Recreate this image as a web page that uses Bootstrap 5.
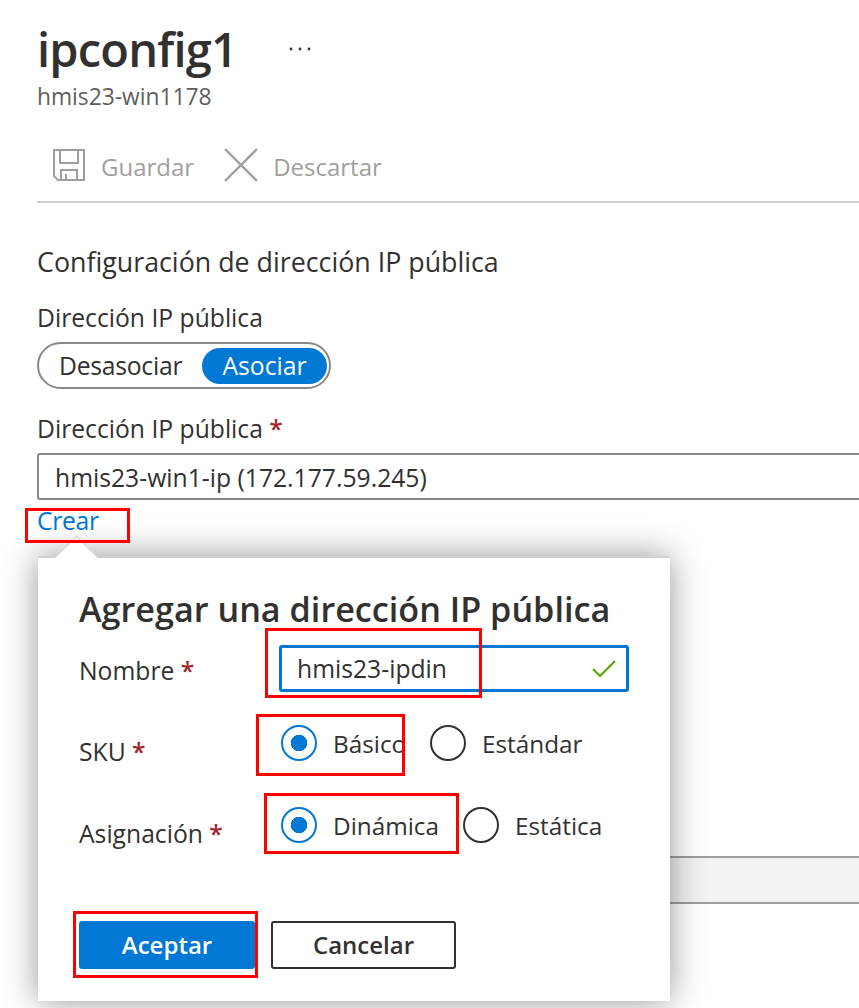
<!DOCTYPE html>
<html lang="es">
<head>
  <meta charset="UTF-8" />
  <meta name="viewport" content="width=device-width, initial-scale=1.0" />
  <title>ipconfig1</title>
  <link href="https://cdn.jsdelivr.net/npm/bootstrap@5.3.0/dist/css/bootstrap.min.css" rel="stylesheet" />
  <style>
    html, body { height: 1008px; overflow: hidden; }
    body { font-family: "Open Sans", "Noto Sans", sans-serif; color: #323130; font-size: 24.7px; background: #fff; }
    .page-wrap { position: relative; height: 1008px; padding: 19px 0 0 37px; }
    .page-title { font-size: 47px; font-weight: 600; line-height: 60px; margin: 0; letter-spacing: -.8px; }
    .more-dots { margin: 0 0 0 52px; }
    .sub-title { font-size: 22.8px; line-height: 30px; color: #605e5c; margin-top: 3px; }
    .cmd-bar { height: 54px; margin-top: 28px; padding-left: 16px; border-bottom: 2px solid #d2d0ce; padding-bottom: 7px; box-sizing: content-box; color: #a19f9d; font-size: 24px; gap: 30px; }
    .cmd-item { gap: 16px; }
    .cmd-x { gap: 15px; }
    .cmd-item svg { margin-top: -4px; }
    .sect-title { font-size: 26.8px; line-height: 34px; margin-top: 42px; }
    .fld-label { line-height: 32px; }
    .fld-first { margin-top: 23px; }
    .req-star { color: #a4262c; font-weight: 600; }
    .pill-toggle { width: 294px; height: 47px; border: 2px solid #8a8886; border-radius: 24px; padding: 4px; margin-top: 8px; margin-bottom: 24px; }
    .pill-off { padding-left: 16px; width: 159px; flex: none; letter-spacing: -.25px; }
    .pill-on { width: 125px; height: 36px; flex: none; background: #0078d4; color: #fff; border-radius: 18px; }
    .ip-box { width: 100%; height: 47px; border: 2px solid #8a8886; border-right: 0; border-radius: 3px 0 0 3px; padding: 2px 0 0 16px; margin-top: 8px; }
    .crear-link { color: #0078d4; line-height: 42px; height: 40px; display: block; text-decoration: none; letter-spacing: -.3px; }
    .dis-box { margin-left: 3px; height: 48px; background: #f3f2f1; border-top: 2px solid #a19f9d; border-bottom: 2px solid #a19f9d; margin-top: 316px; }
    .pop-card { position: absolute; left: 38px; top: 556px; width: 632px; height: 445px; background: #fff; border-top: 2px solid #d2d0ce; box-shadow: 0 0 34px rgba(0,0,0,.42); border-radius: 2px 2px 0 0; padding: 31px 41px 0 41px; }
    .pop-arrow { position: absolute; left: 23px; top: -16px; width: 31px; height: 31px; background: #fff; transform: rotate(45deg); border-left: 1px solid #d2d0ce; border-top: 1px solid #d2d0ce; }
    .pop-title { font-size: 34.2px; font-weight: 600; line-height: 40px; margin: 0 0 16px; position: relative; }
    .pop-row { display: flex; }
    .pop-label { width: 200px; flex: none; }
    .name-label { padding-top: 4px; }
    .name-box { width: 350px; height: 47px; border: 3px solid #0078d4; border-radius: 3px; padding: 0 10px 0 15px; }
    .sku-row { height: 82px; margin-top: 21px; }
    .asig-row { height: 82px; }
    .choice-label { padding-top: 20px; }
    .radio-row { height: 60px; align-self: flex-start; padding-left: 2px; font-size: 24.3px; }
    .radio-row span { padding-top: 2px; }
    .form-check-input.az-radio { width: 36px; height: 36px; margin: 0 16px 0 0; flex: none; border: 2px solid #323130; background-image: none; float: none; }
    .form-check-input.az-radio:checked { background-color: #fff; border-color: #0078d4; background-image: radial-gradient(circle, #0078d4 0, #0078d4 8px, transparent 8.5px); }
    .form-check-input.az-radio:focus { box-shadow: none; }
    .radio-one { width: 97px; }
    .radio-two { width: 130px; }
    .btn-row { margin-top: 44px; }
    .btn.az-btn { width: 176px; height: 48px; border-radius: 3px; font-size: 24px; font-weight: 600; padding: 0; color: #323130; border: 2px solid #323130; background: #fff; }
    .btn.az-btn.az-primary { background: #0078d4; border-color: #0078d4; color: #fff; }
    .btn.az-btn.az-second { width: 185px; }
    .red-mark { position: absolute; border: 3px solid #f00; pointer-events: none; }
    .mark-crear { left: 25px; top: 508px; width: 105px; height: 35px; }
    .mark-name { left: 265px; top: 628px; width: 217px; height: 70px; }
    .mark-sku { left: 256px; top: 714px; width: 149px; height: 62px; }
    .mark-din { left: 264px; top: 793px; width: 195px; height: 61px; }
    .mark-ok { left: 73px; top: 911px; width: 185px; height: 67px; }
  </style>
</head>
<body>
  <div class="page-wrap">
    <div class="d-flex align-items-center">
      <h1 class="page-title">ipconfig1</h1>
      <svg class="more-dots" width="22" height="4" viewBox="0 0 22 4"><circle cx="2" cy="2" r="1.4" fill="#323130"/><circle cx="11" cy="2" r="1.4" fill="#323130"/><circle cx="20" cy="2" r="1.4" fill="#323130"/></svg>
    </div>
    <div class="sub-title">hmis23-win1178</div>

    <div class="cmd-bar d-flex align-items-center">
      <div class="cmd-item d-flex align-items-center">
        <svg width="32" height="32" viewBox="0 0 32 32" fill="none" stroke="#a19f9d" stroke-width="2"><path d="M1 1H31V31H5L1 27Z"/><path d="M7 1V14H25V1"/><path d="M8 31V21H24V31"/><path d="M13 25V31"/></svg>
        <span>Guardar</span>
      </div>
      <div class="cmd-item cmd-x d-flex align-items-center">
        <svg width="34" height="34" viewBox="0 0 34 34" fill="none" stroke="#a19f9d" stroke-width="2.4"><path d="M1 1L33 33M33 1L1 33"/></svg>
        <span>Descartar</span>
      </div>
    </div>

    <div class="sect-title">Configuración de dirección IP pública</div>
    <div class="fld-label fld-first">Dirección IP pública</div>
    <div class="pill-toggle d-flex align-items-center">
      <span class="pill-off">Desasociar</span>
      <span class="pill-on d-flex align-items-center justify-content-center">Asociar</span>
    </div>
    <div class="fld-label">Dirección IP pública <span class="req-star">*</span></div>
    <div class="ip-box d-flex align-items-center">hmis23-win1-ip (172.177.59.245)</div>
    <a class="crear-link" href="#">Crear</a>
    <div class="dis-box"></div>

    <div class="pop-card">
      <div class="pop-arrow"></div>
      <h2 class="pop-title">Agregar una dirección IP pública</h2>
      <div class="pop-row align-items-center">
        <div class="pop-label name-label">Nombre <span class="req-star">*</span></div>
        <div class="name-box d-flex align-items-center justify-content-between">
          <span>hmis23-ipdin</span>
          <svg width="24" height="17" viewBox="0 0 24 17" fill="none" stroke="#57a300" stroke-width="2"><path d="M1 9L8 16L23 1"/></svg>
        </div>
      </div>
      <div class="pop-row sku-row">
        <div class="pop-label choice-label">SKU <span class="req-star">*</span></div>
        <div class="radio-row d-flex align-items-center">
          <input class="form-check-input az-radio" type="radio" name="sku" checked />
          <span class="radio-one">Básico</span>
          <input class="form-check-input az-radio" type="radio" name="sku" />
          <span>Estándar</span>
        </div>
      </div>
      <div class="pop-row asig-row">
        <div class="pop-label choice-label">Asignación <span class="req-star">*</span></div>
        <div class="radio-row d-flex align-items-center">
          <input class="form-check-input az-radio" type="radio" name="asig" checked />
          <span class="radio-two">Dinámica</span>
          <input class="form-check-input az-radio" type="radio" name="asig" />
          <span>Estática</span>
        </div>
      </div>
      <div class="d-flex gap-3 btn-row">
        <button class="btn az-btn az-primary" type="button">Aceptar</button>
        <button class="btn az-btn az-second" type="button">Cancelar</button>
      </div>
    </div>

    <div class="red-mark mark-crear"></div>
    <div class="red-mark mark-name"></div>
    <div class="red-mark mark-sku"></div>
    <div class="red-mark mark-din"></div>
    <div class="red-mark mark-ok"></div>
  </div>
  <script src="https://cdn.jsdelivr.net/npm/bootstrap@5.3.0/dist/js/bootstrap.bundle.min.js"></script>
</body>
</html>
